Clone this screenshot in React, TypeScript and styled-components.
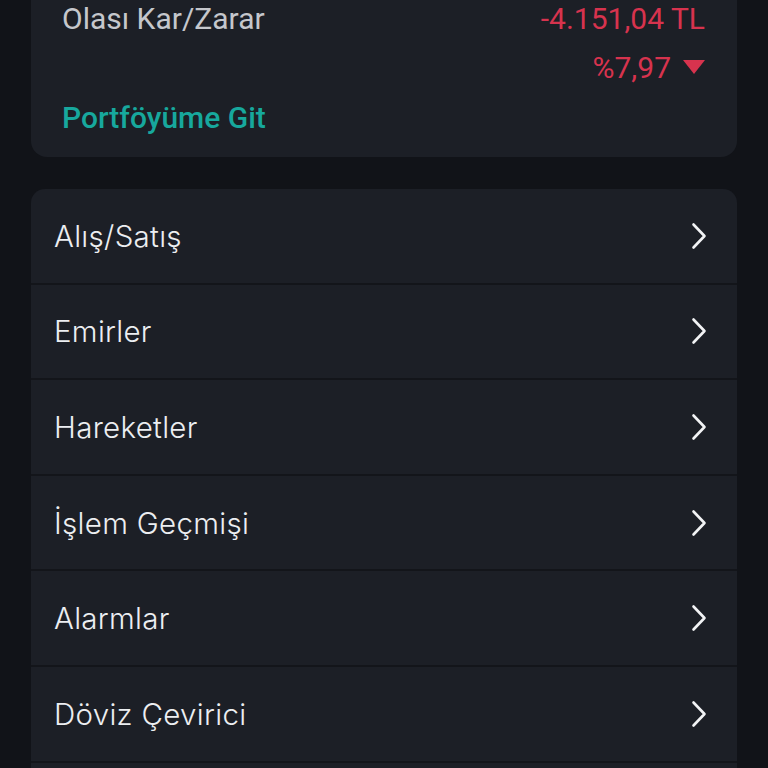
import styled, { createGlobalStyle } from 'styled-components'

const GlobalStyle = createGlobalStyle`
  html, body {
    margin: 0;
    padding: 0;
    background: #111318;
  }
  body {
    font-family: Inter, "Noto Sans", "Liberation Sans", sans-serif;
    -webkit-font-smoothing: antialiased;
  }
`

const menuItems = ['Alış/Satış', 'Emirler', 'Hareketler', 'İşlem Geçmişi', 'Alarmlar', 'Döviz Çevirici']

export default function App() {
  return (
    <Page>
      <GlobalStyle />
      <SummaryCard>
        <SummaryRow>
          <Label>Olası Kar/Zarar</Label>
          <Loss>-4.151,04 TL</Loss>
        </SummaryRow>
        <PercentRow>
          <Loss>%7,97</Loss>
          <DownArrow viewBox="0 0 22 14">
            <path d="M0 0 H22 L11 14 Z" fill="#d7334e" />
          </DownArrow>
        </PercentRow>
        <PortfolioLink>Portföyüme Git</PortfolioLink>
      </SummaryCard>
      <MenuCard>
        {menuItems.map((item) => (
          <MenuRow key={item}>
            <MenuLabel>{item}</MenuLabel>
            <Chevron />
          </MenuRow>
        ))}
      </MenuCard>
    </Page>
  )
}

const Chevron = () => (
  <ChevronSvg viewBox="0 0 16 28">
    <path
      d="M2.5 2.5 L13.5 14 L2.5 25.5"
      fill="none"
      stroke="#f2f3f5"
      strokeWidth={2.6}
      strokeLinecap="round"
      strokeLinejoin="round"
    />
  </ChevronSvg>
)

const Page = styled.div`
  display: flex;
  flex-direction: column;
  gap: 32px;
  padding: 0 31px;
  height: 768px;
  box-sizing: border-box;
  overflow: hidden;
`

const SummaryCard = styled.section`
  flex-shrink: 0;
  background: #1c1f26;
  border-radius: 0 0 16px 16px;
  padding: 0 32px 0 31px;
  height: 157px;
  box-sizing: border-box;
  display: flex;
  flex-direction: column;
`

const SummaryRow = styled.div`
  display: flex;
  justify-content: space-between;
  align-items: center;
  height: 36px;
`

const Label = styled.span`
  font-family: Roboto, "Liberation Sans", sans-serif;
  font-size: 30px;
  color: #c5c7cc;
`

const Loss = styled.span`
  font-family: Roboto, "Liberation Sans", sans-serif;
  font-size: 30px;
  color: #d7334e;
`

const PercentRow = styled.div`
  display: flex;
  justify-content: flex-end;
  align-items: center;
  gap: 12px;
  height: 62px;
`

const DownArrow = styled.svg`
  width: 22px;
  height: 14px;
`

const PortfolioLink = styled.a`
  font-family: Roboto, "Liberation Sans", sans-serif;
  font-size: 30px;
  font-weight: 500;
  color: #17a89d;
  line-height: 40px;
  cursor: pointer;
`

const MenuCard = styled.nav`
  flex: 1;
  background: #1c1f26;
  border-radius: 14px 14px 0 0;
  display: flex;
  flex-direction: column;
`

const MenuRow = styled.div`
  display: flex;
  align-items: center;
  justify-content: space-between;
  height: 93.6px;
  padding: 0 30px 0 23px;
  border-bottom: 2px solid #13151a;
  flex-shrink: 0;
`

const MenuLabel = styled.span`
  font-size: 29.5px;
  font-weight: 300;
  color: #eceef1;
  letter-spacing: 0.3px;
`

const ChevronSvg = styled.svg`
  width: 16px;
  height: 28px;
`
